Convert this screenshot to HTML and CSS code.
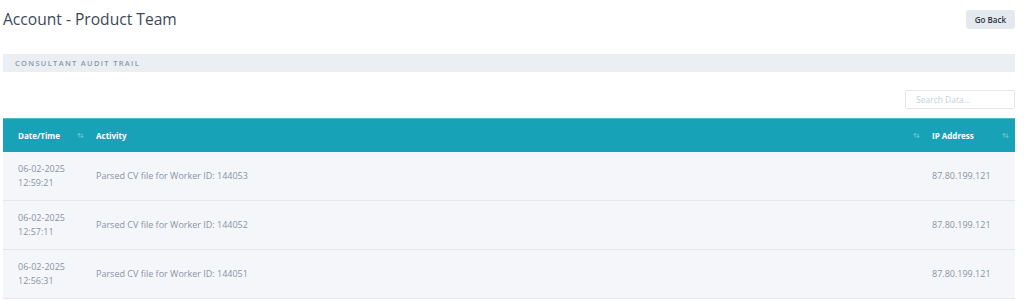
FILE: index.html
```html
<!DOCTYPE html>
<html>
<head>
    <title>Account - Product Team</title>
    <link rel="stylesheet" href="styles.css">
</head>
<body>
    <div class="page">
        <div class="page-header">
            <h1>Account - Product Team</h1>
            <a href="#" class="btn-back">Go Back</a>
        </div>

        <div class="section-bar">CONSULTANT AUDIT TRAIL</div>

        <div class="toolbar">
            <input type="text" class="search-input" placeholder="Search Data...">
        </div>

        <table class="audit-table">
            <thead>
                <tr>
                    <th class="col-date"><div class="th-inner"><span>Date/Time</span><svg class="sort-icon" width="7" height="5" viewBox="0 0 14 10" fill="none" stroke="currentColor" stroke-width="1.6"><path d="M4 9V1M1 4l3-3 3 3"/><path d="M10 1v8M7 6l3 3 3-3"/></svg></div></th>
                    <th class="col-activity"><div class="th-inner"><span>Activity</span><svg class="sort-icon" width="7" height="5" viewBox="0 0 14 10" fill="none" stroke="currentColor" stroke-width="1.6"><path d="M4 9V1M1 4l3-3 3 3"/><path d="M10 1v8M7 6l3 3 3-3"/></svg></div></th>
                    <th class="col-ip"><div class="th-inner"><span>IP Address</span><svg class="sort-icon" width="7" height="5" viewBox="0 0 14 10" fill="none" stroke="currentColor" stroke-width="1.6"><path d="M4 9V1M1 4l3-3 3 3"/><path d="M10 1v8M7 6l3 3 3-3"/></svg></div></th>
                </tr>
            </thead>
            <tbody>
                <tr>
                    <td>06-02-2025<br>12:59:21</td>
                    <td>Parsed CV file for Worker ID: 144053</td>
                    <td>87.80.199.121</td>
                </tr>
                <tr>
                    <td>06-02-2025<br>12:57:11</td>
                    <td>Parsed CV file for Worker ID: 144052</td>
                    <td>87.80.199.121</td>
                </tr>
                <tr>
                    <td>06-02-2025<br>12:56:31</td>
                    <td>Parsed CV file for Worker ID: 144051</td>
                    <td>87.80.199.121</td>
                </tr>
            </tbody>
        </table>
    </div>
</body>
</html>
```

FILE: styles.css
```css
:root {
    --teal: #17a2b8;
    --row-bg: #f5f6fa;
    --row-border: #e3e6eb;
    --muted-text: #8a93a5;
    --title-color: #3d4859;
}

* {
    margin: 0;
    padding: 0;
    box-sizing: border-box;
    font-family: "Open Sans", Arial, sans-serif;
}

body {
    background-color: white;
}

.page {
    padding: 10px 9px 0 3px;
}

/* ========== Header ========== */
.page-header {
    display: flex;
    justify-content: space-between;
    align-items: center;
}

.page-header h1 {
    font-size: 15.6px;
    font-weight: 400;
    line-height: 19px;
    color: var(--title-color);
}

.btn-back {
    display: flex;
    align-items: center;
    height: 19px;
    padding: 0 9px;
    background-color: #e4e8ef;
    border-radius: 3px;
    font-size: 8px;
    font-weight: 600;
    color: #2c3340;
    text-decoration: none;
}

/* ========== Section bar ========== */
.section-bar {
    margin-top: 25px;
    height: 18px;
    display: flex;
    align-items: center;
    padding-left: 12px;
    background-color: #ebeef2;
    font-size: 7.5px;
    font-weight: 600;
    letter-spacing: 1.3px;
    color: #8b98ab;
}

.toolbar {
    margin-top: 18px;
    display: flex;
    justify-content: flex-end;
}

.search-input {
    width: 110px;
    height: 19px;
    padding: 0 10px;
    border: 1px solid #e3e7ed;
    border-radius: 2px;
    font-size: 8.5px;
    outline: none;
}

.search-input::placeholder {
    color: #c9d0da;
}

/* ========== Table ========== */
.audit-table {
    margin-top: 9px;
    width: 100%;
    border-collapse: collapse;
}

.audit-table th {
    height: 33px;
    background-color: var(--teal);
    border-top: 1px solid #4fbccd;
    color: white;
    font-size: 8px;
    font-weight: 700;
    text-align: left;
    padding: 0 6px;
}

.th-inner {
    display: flex;
    justify-content: space-between;
    align-items: center;
}

.sort-icon {
    color: rgba(255, 255, 255, 0.45);
}

.col-date {
    width: 87px;
}

.col-ip {
    width: 89px;
}

.audit-table td {
    height: 49px;
    padding: 0 6px;
    background-color: var(--row-bg);
    border-bottom: 1px solid var(--row-border);
    font-size: 9px;
    line-height: 14px;
    color: var(--muted-text);
}

.audit-table th:first-child,
.audit-table td:first-child {
    padding-left: 15px;
}
```
